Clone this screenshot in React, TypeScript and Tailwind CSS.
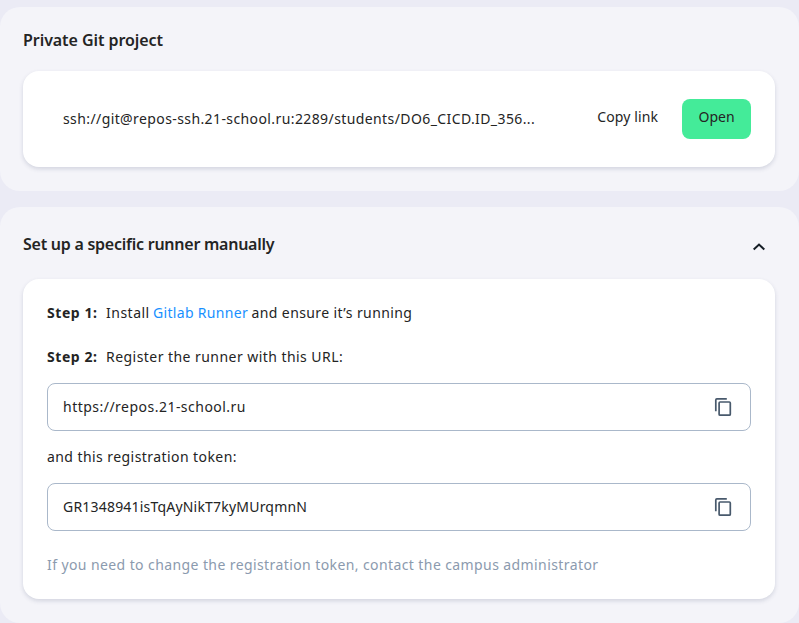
import type { ReactNode } from "react";

function CopyIcon() {
  return (
    <svg className="size-6 shrink-0 fill-none stroke-[#48596c] stroke-[1.7]" viewBox="0 0 24 24" aria-hidden="true">
      <path d="M15.800 3.800H5.900Q4.800 3.800 4.800 4.900V16.300" />
      <rect x="8.100" y="7" width="11.200" height="13.200" rx="1" />
    </svg>
  );
}

function Panel({ className, children }: { className: string; children: ReactNode }) {
  return <section className={`rounded-[20px] bg-[#f4f4f9] pr-6 pl-[23px] ${className}`}>{children}</section>;
}

function Card({ className, children }: { className: string; children: ReactNode }) {
  return (
    <div className={`rounded-2xl bg-white shadow-[0_2px_4px_rgba(60,70,110,0.18)] ${className}`}>{children}</div>
  );
}

function CopyField({ children }: { children: ReactNode }) {
  return (
    <div className="flex h-12 items-center justify-between rounded-lg border border-[#aab8ca] px-[15px]">
      {children}
      <button type="button" aria-label="Copy">
        <CopyIcon />
      </button>
    </div>
  );
}

export default function App() {
  return (
    <main className="h-[623px] w-[799px] overflow-hidden bg-[#ebebf5] pt-[7px] font-['Noto_Sans',sans-serif] text-sm leading-5 text-[#242424]">
      <Panel className="h-[184px] pt-[21px]">
        <h2 className="h-6 text-base leading-6 font-semibold tracking-[-0.06px] whitespace-nowrap">
          Private Git project
        </h2>
        <Card className="mt-[19px] flex h-24 items-center pr-6 pl-10">
          <span className="tracking-[0.4px] whitespace-nowrap">
            ssh://git@repos-ssh.21-school.ru:2289/students/DO6_CICD.ID_356...
          </span>
          <button type="button" className="mr-6 -mt-1 ml-auto tracking-[0.1px] whitespace-nowrap">
            Copy link
          </button>
          <button type="button" className="h-10 w-[69px] rounded-lg bg-[#44eb99] pb-1 whitespace-nowrap">
            Open
          </button>
        </Card>
      </Panel>
      <Panel className="mt-4 h-[416px] pt-[25px]">
        <div className="flex h-6 items-center justify-between">
          <h2 className="text-base leading-6 font-semibold tracking-[-0.25px] whitespace-nowrap">
            Set up a specific runner manually
          </h2>
          <svg className="mt-1.5 mr-1 size-6 fill-none stroke-[#151d26] stroke-2" viewBox="0 0 24 24" aria-hidden="true">
            <path d="m6.700 14.500 5.300-5 5.300 5" />
          </svg>
        </div>
        <Card className="mt-[23px] h-[320px] px-6 pt-6">
          <p className="flex whitespace-nowrap">
            <b className="w-[59px] tracking-[0.55px]">Step 1:</b>
            <span className="w-[47px] tracking-[0.5px]">Install</span>
            <a className="w-[98.5px] tracking-[0.32px] text-[#1890ff]">Gitlab Runner</a>
            <span className="tracking-[0.4px]">and ensure it’s running</span>
          </p>
          <p className="mt-6 mb-4 flex whitespace-nowrap">
            <b className="w-[59px] tracking-[0.55px]">Step 2:</b>
            <span className="tracking-[0.45px]">Register the runner with this URL:</span>
          </p>
          <CopyField>
            <span className="tracking-[0.48px]">https://repos.21-school.ru</span>
          </CopyField>
          <p className="my-4 tracking-[0.43px] whitespace-nowrap">and this registration token:</p>
          <CopyField>
            <span className="tracking-[0.2px]">GR1348941isTqAyNikT7kyMUrqmnN</span>
          </CopyField>
          <p className="mt-6 tracking-[0.405px] whitespace-nowrap text-[#8b9aae]">
            If you need to change the registration token, contact the campus administrator
          </p>
        </Card>
      </Panel>
    </main>
  );
}
